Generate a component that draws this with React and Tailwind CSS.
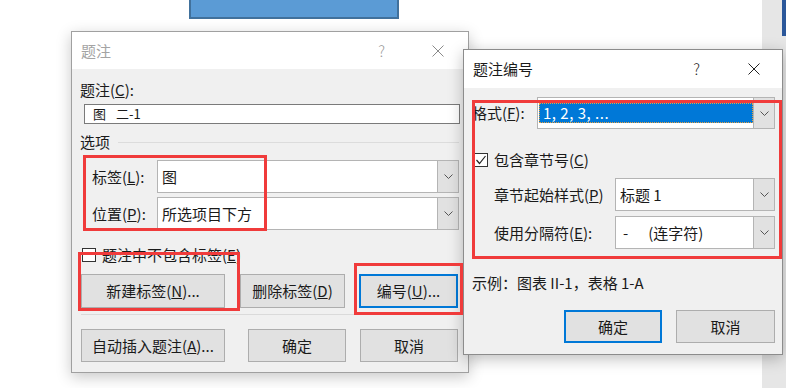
import React from 'react';

const Chevron = () => (
  <svg width="9" height="5" viewBox="0 0 9 5">
    <path d="M0.5 0.5 L4.5 4.5 L8.5 0.5" fill="none" stroke="#555" strokeWidth="1" />
  </svg>
);

const CloseIcon = ({ color }) => (
  <svg width="12" height="12" viewBox="0 0 12 12">
    <path d="M0.5 0.5 L11.5 11.5 M11.5 0.5 L0.5 11.5" stroke={color} strokeWidth="1" />
  </svg>
);

const Combo = ({ children, className = '' }) => (
  <div className={`flex h-[33px] border border-[#b4b4b4] bg-white ${className}`}>
    <div className="flex flex-1 items-center pl-[4px]">{children}</div>
    <div className="flex w-[21px] items-center justify-center border-l border-[#b4b4b4] bg-[#e1e1e1]">
      <Chevron />
    </div>
  </div>
);

const Btn = ({ children, className = '', primary }) => (
  <div
    className={`flex items-center justify-center bg-[#e1e1e1] ${
      primary ? 'border-2 border-[#0078d7]' : 'border border-[#adadad]'
    } ${className}`}
  >
    {children}
  </div>
);

const Box = ({ checked }) => (
  <div className="flex h-[14px] w-[14px] items-center justify-center border border-[#333] bg-white">
    {checked && (
      <svg width="12" height="12" viewBox="0 0 12 12">
        <path d="M1.5 6 L4.5 9.5 L10.5 2" fill="none" stroke="#222" strokeWidth="1.2" />
      </svg>
    )}
  </div>
);

const Mark = ({ className }) => (
  <div className={`pointer-events-none absolute border-[3px] border-[#f03b3b] ${className}`} />
);

export default function App() {
  return (
    <div className="relative h-[388px] w-[786px] overflow-hidden bg-white font-['Noto_Sans_CJK_SC',sans-serif] text-[15px] leading-[20px] text-[#1a1a1a]">
      {/* document behind */}
      <div className="flex h-full">
        <div className="flex-1">
          <div className="ml-[189px] h-[19px] w-[210px] border-2 border-t-0 border-[#41719c] bg-[#5b9bd5]" />
        </div>
        <div className="w-[20px] bg-[#e6e6e6]" />
        <div className="flex w-[4px] flex-col bg-[#e6e6e6]">
          <div className="h-[36px] bg-[#2b579a]" />
        </div>
      </div>

      {/* 题注 dialog */}
      <div className="absolute left-[71px] top-[31px] flex h-[342px] w-[398px] flex-col border border-[#a0a0a0] bg-[#f0f0f0] shadow-[0_4px_14px_rgba(0,0,0,0.22)]">
        <div className="flex h-[37px] items-center bg-white pl-[9px] pr-[24px]">
          <span className="text-[#a3a3a3]">题注</span>
          <span className="ml-auto font-light text-[#9a9a9a]">?</span>
          <span className="ml-[47px] flex">
            <CloseIcon color="#8a8a8a" />
          </span>
        </div>
        <div className="flex flex-col">
          <div className="mt-[11px] pl-[8px]">
            题注(<u>C</u>):
          </div>
          <div className="ml-[12px] mt-[4px] flex h-[20px] w-[376px] items-center border border-[#7a7a7a] bg-white pl-[8px] text-[13px]">
            <span>图</span>
            <span className="ml-[10px]">二-1</span>
          </div>
          <div className="mt-[8px] flex items-center pl-[8px]">
            <span>选项</span>
            <div className="ml-[8px] mr-[9px] h-px flex-1 bg-[#dcdcdc]" />
          </div>
          <div className="mt-[8px] flex items-center pl-[20px]">
            <span className="w-[65px]">
              标签(<u>L</u>):
            </span>
            <Combo className="w-[302px]">图</Combo>
          </div>
          <div className="mt-[4px] flex items-center pl-[20px]">
            <span className="w-[65px]">
              位置(<u>P</u>):
            </span>
            <Combo className="w-[302px]">所选项目下方</Combo>
          </div>
          <div className="mt-[15px] flex items-center gap-[6px] pl-[10px]">
            <Box />
            <span>
              题注中不包含标签(<u>E</u>)
            </span>
          </div>
          <div className="mt-[9px] flex h-[34px] pl-[9px]">
            <Btn className="w-[144px]">
              新建标签(<u>N</u>)...
            </Btn>
            <Btn className="ml-[15px] w-[105px]">
              删除标签(<u>D</u>)
            </Btn>
            <Btn primary className="ml-[14px] w-[99px]">
              编号(<u>U</u>)...
            </Btn>
          </div>
          <div className="ml-[9px] mr-[9px] mt-[6px] h-px bg-[#dadada]" />
          <div className="mt-[14px] flex h-[33px] pl-[9px]">
            <Btn className="w-[144px]">
              自动插入题注(<u>A</u>)...
            </Btn>
            <Btn className="ml-[23px] w-[98px]">确定</Btn>
            <Btn className="ml-[14px] w-[98px]">取消</Btn>
          </div>
        </div>
      </div>

      {/* 题注编号 dialog */}
      <div className="absolute left-[463px] top-[49px] flex h-[306px] w-[320px] flex-col border border-[#8c8c8c] bg-[#f0f0f0] shadow-[0_4px_14px_rgba(0,0,0,0.25)]">
        <div className="flex h-[38px] items-center bg-white pl-[9px] pr-[22px]">
          <span>题注编号</span>
          <span className="ml-auto font-light">?</span>
          <span className="ml-[48px] flex">
            <CloseIcon color="#222" />
          </span>
        </div>
        <div className="flex flex-col">
          <div className="mt-[9px] flex items-center pl-[8px]">
            <span className="w-[65px]">
              格式(<u>F</u>):
            </span>
            <div className="flex h-[32px] w-[238px] border border-[#b4b4b4] bg-white">
              <div className="flex flex-1 items-center pb-[1px] pl-px">
                <div className="flex h-[20px] w-full items-center border border-dotted border-[#e8a040] bg-[#0078d7] pl-[3px] tracking-[0.5px] text-white">
                  1, 2, 3, ...
                </div>
              </div>
              <div className="flex w-[21px] items-center justify-center border-l border-[#b4b4b4] bg-[#e1e1e1]">
                <Chevron />
              </div>
            </div>
          </div>
          <div className="mt-[21px] flex items-center gap-[6px] pl-[10px]">
            <Box checked />
            <span>
              包含章节号(<u>C</u>)
            </span>
          </div>
          <div className="mt-[8px] flex items-center pl-[30px]">
            <span className="w-[121px]">
              章节起始样式(<u>P</u>)
            </span>
            <Combo className="w-[160px]">标题 1</Combo>
          </div>
          <div className="mt-[5px] flex items-center pl-[30px]">
            <span className="w-[121px]">
              使用分隔符(<u>E</u>):
            </span>
            <Combo className="w-[160px]">
              <span className="pl-[3px]">-</span>
              <span className="ml-[20px]">(连字符)</span>
            </Combo>
          </div>
          <div className="mt-[24px] pl-[8px]">示例：图表 II-1，表格 1-A</div>
          <div className="mt-[17px] flex h-[33px] pl-[100px]">
            <Btn primary className="w-[98px]">
              确定
            </Btn>
            <Btn className="ml-[14px] w-[99px]">取消</Btn>
          </div>
        </div>
      </div>

      {/* red annotation boxes */}
      <Mark className="left-[83px] top-[155px] h-[76px] w-[184px]" />
      <Mark className="left-[78px] top-[252px] h-[59px] w-[162px]" />
      <Mark className="left-[354px] top-[263px] h-[52px] w-[109px]" />
      <Mark className="left-[472px] top-[100px] h-[159px] w-[310px]" />
    </div>
  );
}
